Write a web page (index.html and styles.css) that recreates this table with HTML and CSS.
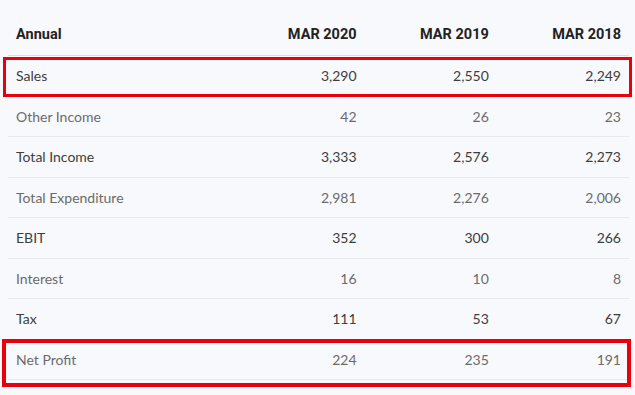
FILE: index.html
```html
<!DOCTYPE html>
<html lang="en">
<head>
  <meta charset="UTF-8" />
  <meta name="viewport" content="width=device-width, initial-scale=1" />
  <title>Annual Results</title>
  <link rel="stylesheet" href="styles.css">
</head>
<body>
  <div class="results">
    <table class="fin-table">
      <colgroup>
        <col class="col-label">
        <col class="col-year">
        <col class="col-year">
        <col class="col-year">
      </colgroup>
      <thead>
        <tr>
          <th>Annual</th>
          <th>MAR 2020</th>
          <th>MAR 2019</th>
          <th>MAR 2018</th>
        </tr>
      </thead>
      <tbody>
        <tr><td>Sales</td><td>3,290</td><td>2,550</td><td>2,249</td></tr>
        <tr class="muted"><td>Other Income</td><td>42</td><td>26</td><td>23</td></tr>
        <tr><td>Total Income</td><td>3,333</td><td>2,576</td><td>2,273</td></tr>
        <tr class="muted"><td>Total Expenditure</td><td>2,981</td><td>2,276</td><td>2,006</td></tr>
        <tr><td>EBIT</td><td>352</td><td>300</td><td>266</td></tr>
        <tr class="muted"><td>Interest</td><td>16</td><td>10</td><td>8</td></tr>
        <tr><td>Tax</td><td>111</td><td>53</td><td>67</td></tr>
        <tr class="muted"><td>Net Profit</td><td>224</td><td>235</td><td>191</td></tr>
      </tbody>
    </table>
    <div class="mark mark-sales"></div>
    <div class="mark mark-profit"></div>
  </div>
</body>
</html>
```

FILE: styles.css
```css
body {
  margin: 0;
  min-height: 395px;
  background-color: #f8f9fc;
  font-family: 'Lato', sans-serif;
  color: #3d3d3d;
}
.results {
  position: relative;
  padding: 14px 6px 0 8px;
}
.fin-table {
  width: 621px;
  table-layout: fixed;
  border-collapse: collapse;
}
.col-label {
  width: 224px;
}
.col-year {
  width: 132px;
}
.fin-table th {
  font-family: 'Roboto', sans-serif;
  font-weight: 700;
  font-size: 14.5px;
  color: #222;
  text-align: right;
  padding: 0 8px;
  height: 41px;
  border-bottom: 1px solid #dcdde2;
}
.fin-table th:first-child,
.fin-table td:first-child {
  text-align: left;
}
.fin-table td {
  font-size: 14px;
  text-align: right;
  padding: 0 8px;
  height: 39.5px;
  border-bottom: 1px solid #e8e9ee;
}
.fin-table tr.muted td {
  color: #6b6b6b;
}
.mark {
  position: absolute;
  border: 3px solid #e8000b;
  box-sizing: border-box;
}
.mark-sales {
  left: 3px;
  top: 57px;
  width: 629px;
  height: 40px;
}
.mark-profit {
  left: 2px;
  top: 339px;
  width: 629px;
  height: 48px;
  border-width: 4px;
}
```
